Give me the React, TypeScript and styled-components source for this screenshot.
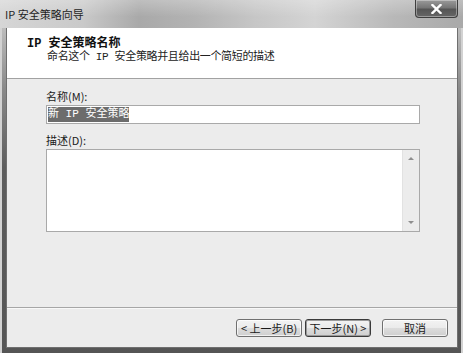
import styled, { createGlobalStyle } from 'styled-components';

const GlobalStyle = createGlobalStyle`
	html, body {
		margin: 0;
		padding: 0;
		background: #ffffff;
	}
	body {
		font-family: 'Noto Sans CJK SC', sans-serif;
		color: #1a1a1a;
	}
`;

const Frame = styled.div`
	width: 463px;
	height: 353px;
	box-sizing: border-box;
	display: flex;
	flex-direction: column;
	background: #d2d2d2;
`;

const TitleBar = styled.div`
	height: 28px;
	flex: none;
	display: flex;
	align-items: flex-start;
	padding-left: 5px;
	background:
		linear-gradient(180deg, rgba(255, 255, 255, 0.25) 0%, rgba(0, 0, 0, 0) 60%),
		linear-gradient(
			90deg,
			#d6d6d6 0%,
			#c9c9c9 18%,
			#a9a9a9 30%,
			#b3b3b3 42%,
			#c6c6c6 55%,
			#d4d4d4 68%,
			#b8b8b8 85%,
			#a9a9a9 100%
		);
`;

const TitleText = styled.span`
	line-height: 28px;
	font-size: 11px;
	color: #1e1e1e;
`;

const CloseButton = styled.button`
	margin-left: auto;
	margin-right: 5px;
	width: 43px;
	height: 18px;
	padding: 0;
	border: 1px solid #3e3e3e;
	border-top: none;
	border-radius: 0 0 4px 4px;
	background: linear-gradient(180deg, #9a9a9a 0%, #767676 45%, #555555 55%, #666666 100%);
	box-shadow: inset 0 0 0 1px rgba(255, 255, 255, 0.35);
	display: flex;
	align-items: center;
	justify-content: center;
`;

const Chrome = styled.div`
	flex: 1;
	display: flex;
	margin: 0 2px;
	padding: 0 3px 5px 4px;
	background: linear-gradient(180deg, #bdbdbd 0px, #8a8a8a 60px, #5d5d5d 140px, #555555 100%);
`;

const Client = styled.div`
	flex: 1;
	display: flex;
	flex-direction: column;
	border: 1px solid #6f6f6f;
	border-top: none;
	background: #ececec;
`;

// white banner with the step title and its short description
const Header = styled.div`
	flex: none;
	background: #ffffff;
	border-bottom: 1px solid #a2a2a2;
	display: flex;
	flex-direction: column;
	padding: 10px 0 0 20px;
	box-sizing: content-box;
	height: 40px;
`;

const HeaderTitle = styled.div`
	font-family: 'Liberation Mono', 'Noto Sans CJK SC', monospace;
	font-size: 12px;
	font-weight: bold;
	line-height: 13px;
	color: #111111;
`;

const HeaderSub = styled.div`
	font-family: 'Liberation Mono', 'Noto Sans CJK SC', monospace;
	font-size: 11px;
	line-height: 13px;
	letter-spacing: -0.35px;
	padding-left: 20px;
	color: #222222;
`;

const Body = styled.div`
	flex: 1;
	padding: 10px 37px 0 39px;
	border-bottom: 1px solid #a6a6a6;
	box-shadow: 0 1px 0 #f8f8f8;
	display: flex;
	flex-direction: column;
`;

const Field = styled.div<{ $top?: number }>`
	display: flex;
	flex-direction: column;
	gap: 1px;
	margin-top: ${p => p.$top ?? 0}px;
`;

const Label = styled.label`
	font-size: 11px;
	line-height: 15px;
	color: #1a1a1a;
`;

const TextInput = styled.div`
	height: 19px;
	box-sizing: border-box;
	border: 1px solid #a9a9a9;
	background: #ffffff;
	display: flex;
	align-items: center;
	padding-left: 1px;
`;

const Selected = styled.span`
	font-family: 'Liberation Mono', 'Noto Sans CJK SC', monospace;
	font-size: 11px;
	line-height: 15px;
	background: #6c6c6c;
	color: #ffffff;
	white-space: pre;
`;

const TextBox = styled.div`
	height: 83px;
	box-sizing: border-box;
	border: 1px solid #a9a9a9;
	background: #ffffff;
	display: flex;
`;

const Area = styled.textarea`
	flex: 1;
	border: none;
	outline: none;
	resize: none;
	background: transparent;
	overflow: hidden;
`;

const ScrollTrack = styled.div`
	width: 16px;
	flex: none;
	background: #ececec;
	border-left: 1px solid #e2e2e2;
	display: flex;
	flex-direction: column;
	justify-content: space-between;
	align-items: center;
	padding: 7px 0 7px;
`;

const Arrow = styled.div<{ $down?: boolean }>`
	width: 0;
	height: 0;
	border-left: 3px solid transparent;
	border-right: 3px solid transparent;
	${p =>
		p.$down
			? 'border-top: 3px solid #8e8e8e;'
			: 'border-bottom: 3px solid #8e8e8e;'}
`;

const Footer = styled.div`
	height: 38px;
	flex: none;
	display: flex;
	align-items: center;
	justify-content: flex-end;
	padding-right: 9px;
	margin-top: 1px;
`;

const Button = styled.button<{ $primary?: boolean; $gap?: number }>`
	width: 66px;
	height: 18px;
	padding: 0;
	margin-left: ${p => p.$gap ?? 0}px;
	font-family: 'Noto Sans CJK SC', sans-serif;
	font-size: 11px;
	line-height: 14px;
	color: #1a1a1a;
	border: 1px solid ${p => (p.$primary ? '#3a3a3a' : '#707070')};
	border-radius: 3px;
	background: linear-gradient(180deg, #f3f3f3 0%, #ebebeb 48%, #dcdcdc 52%, #cfcfcf 100%);
	box-shadow: inset 0 0 0 1px ${p => (p.$primary ? '#9a9a9a' : 'rgba(255,255,255,0.7)')};
	white-space: pre;
`;

export default function App() {
	return (
		<>
			<GlobalStyle />
			<Frame>
				<TitleBar>
					<TitleText>IP 安全策略向导</TitleText>
					<CloseButton aria-label="关闭">
						<svg width="11" height="10" viewBox="0 0 11 10">
							<path
								d="M1.5 1 L9.5 9 M9.5 1 L1.5 9"
								stroke="#ffffff"
								strokeWidth="2.4"
								strokeLinecap="square"
							/>
						</svg>
					</CloseButton>
				</TitleBar>
				<Chrome>
					<Client>
						<Header>
							<HeaderTitle>IP 安全策略名称</HeaderTitle>
							<HeaderSub>命名这个 IP 安全策略并且给出一个简短的描述</HeaderSub>
						</Header>
						<Body>
							<Field>
								<Label>名称(M):</Label>
								<TextInput>
									<Selected>新 IP 安全策略</Selected>
								</TextInput>
							</Field>
							<Field $top={9}>
								<Label>描述(D):</Label>
								<TextBox>
									<Area readOnly />
									<ScrollTrack>
										<Arrow />
										<Arrow $down />
									</ScrollTrack>
								</TextBox>
							</Field>
						</Body>
						<Footer>
							<Button>{'< 上一步(B)'}</Button>
							<Button $primary $gap={3}>
								{'下一步(N) >'}
							</Button>
							<Button $gap={11}>取消</Button>
						</Footer>
					</Client>
				</Chrome>
			</Frame>
		</>
	);
}
